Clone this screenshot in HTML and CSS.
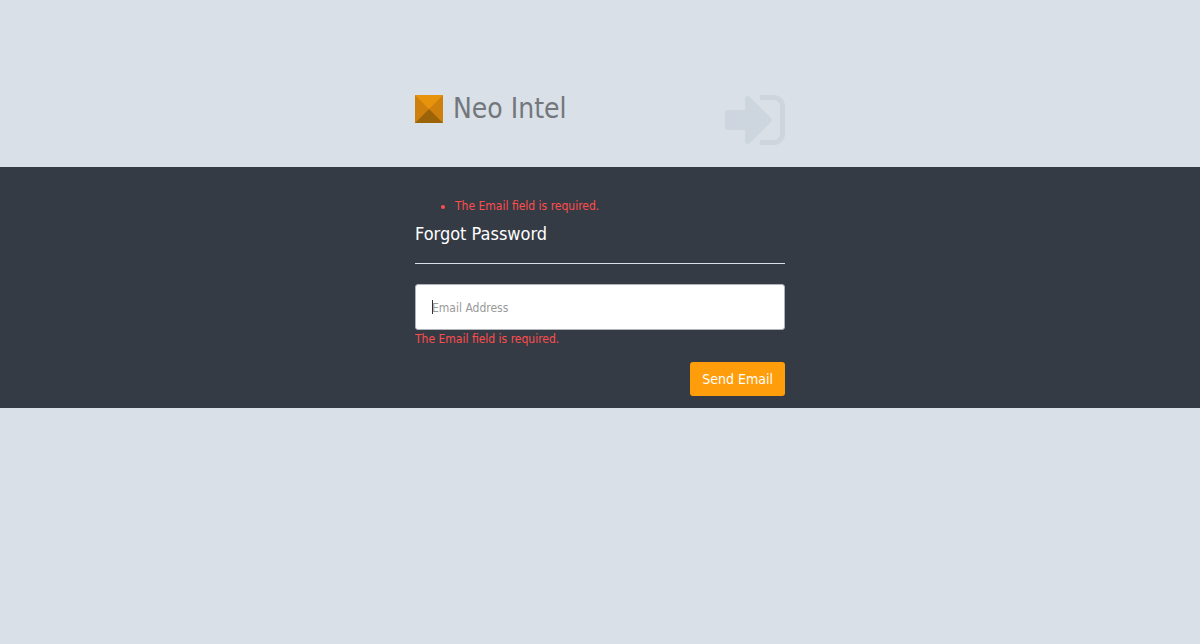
FILE: index.html
```html
<!DOCTYPE html>
<html lang="en">
<head>
<meta charset="utf-8">
<meta name="viewport" content="width=device-width, initial-scale=1">
<title>Neo Intel - Forgot Password</title>
<link rel="stylesheet" href="styles.css">
</head>
<body>
<header class="login-header">
  <div class="login-content">
    <h1 class="brand">
      <svg class="brand-logo" viewBox="0 0 28 28" aria-hidden="true">
        <path fill="#cf800c" d="M0 0h28v28H0z"/>
        <path fill="#e8930c" d="M0 0h28L14 14z"/>
        <path fill="#9c6409" d="M0 28l14-14 14 14z"/>
      </svg>
      Neo Intel
    </h1>
    <svg class="sign-in" viewBox="0 0 60 50" aria-hidden="true">
      <path fill="#cdd5de" d="M3 15h17V4c0-3 3-4 5-2l20 20c2 2 2 4 0 6L25 48c-2 2-5 1-5-2V35H3c-2 0-3-1-3-3V18c0-2 1-3 3-3z"/>
      <path fill="none" stroke="#cdd5de" stroke-width="5" d="M35 2.500h13c6 0 9.500 4 9.500 9v27c0 5-3.500 9-9.500 9H35"/>
    </svg>
  </div>
</header>
<main class="panel">
  <form class="login-content form" novalidate>
    <ul class="errors"><li>The Email field is required.</li></ul>
    <h2 class="title">Forgot Password</h2>
    <hr class="rule">
    <div class="field">
      <input class="email" type="email" placeholder="Email Address" aria-label="Email Address" aria-describedby="email-error" autofocus>
      <span class="caret" aria-hidden="true"></span>
    </div>
    <span class="field-error" id="email-error">The Email field is required.</span>
    <button class="send" type="submit">Send Email</button>
  </form>
</main>
</body>
</html>
```
FILE: styles.css
```css
* { box-sizing: border-box; }
body {
  margin: 0;
  background: #d9e0e7;
  color: #fff;
  font: 12px/18px Tahoma, "DejaVu Sans Condensed", "Noto Sans", sans-serif;
}
.login-content {
  width: 100%;
  max-width: 370px;
  margin: 0 auto;
}
.login-header { padding: 90px 0 22px; }
.login-header .login-content {
  display: flex;
  justify-content: space-between;
}
.brand {
  display: flex;
  align-items: center;
  gap: 10px;
  height: 37px;
  margin: 0;
  color: #73777c;
  font-size: 28px;
  font-weight: 400;
  line-height: 37px;
}
.brand-logo { width: 28px; height: 28px; }
.sign-in { width: 60px; height: 50px; margin-top: 5px; }
.panel {
  padding: 30px 0 12px;
  background: #343b45;
}
.form { display: flex; flex-direction: column; }
.errors {
  margin: 0 0 9px;
  padding-left: 40px;
  color: #ff4d4b;
}
.title { margin: 0; font-size: 18px; font-weight: 500; line-height: 20px; }
.rule {
  width: 100%;
  margin: 19px 0 20px;
  border: 0;
  border-top: 1px solid #d9e0e7;
}
.field { position: relative; }
.email {
  display: block;
  width: 100%;
  height: 46px;
  padding: 12px 16px 10px;
  border: 1px solid #b0b4b9;
  border-radius: 3px;
  outline: 0;
  background: #fff;
  color: #555;
  caret-color: transparent;
  font: inherit;
}
.email::placeholder { color: #999; opacity: 1; }
.caret {
  position: absolute;
  top: 16px;
  left: 17px;
  width: 1px;
  height: 14px;
  background: #333;
}
.email:not(:placeholder-shown) + .caret { display: none; }
.field-error { color: #ff4d4b; }
.send {
  align-self: flex-end;
  height: 34px;
  margin-top: 14px;
  padding: 6px 12px;
  border: 0;
  border-radius: 3px;
  background: #ff9d0a;
  color: #fff;
  font: 14px/20px Tahoma, "DejaVu Sans Condensed", "Noto Sans", sans-serif;
}
```
